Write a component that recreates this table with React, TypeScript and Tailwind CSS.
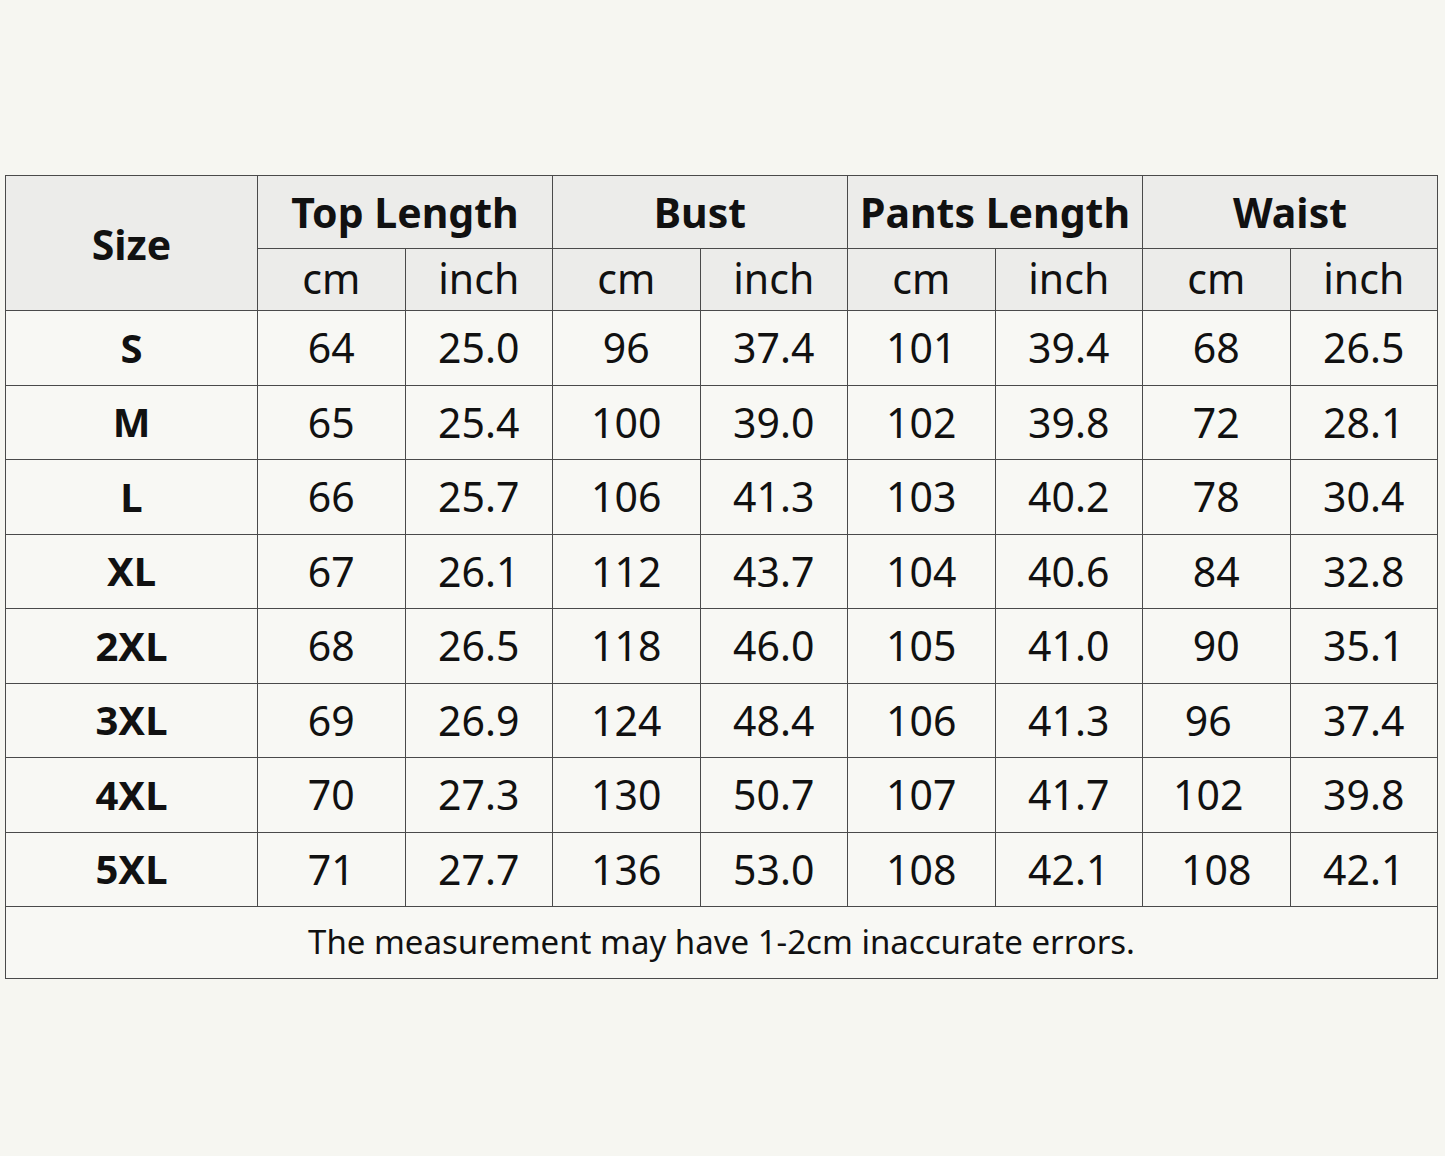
import React from 'react';

type Row = { size: string; vals: string[]; shift?: boolean };

const rows: Row[] = [
  { size: 'S', vals: ['64', '25.0', '96', '37.4', '101', '39.4', '68', '26.5'] },
  { size: 'M', vals: ['65', '25.4', '100', '39.0', '102', '39.8', '72', '28.1'] },
  { size: 'L', vals: ['66', '25.7', '106', '41.3', '103', '40.2', '78', '30.4'] },
  { size: 'XL', vals: ['67', '26.1', '112', '43.7', '104', '40.6', '84', '32.8'] },
  { size: '2XL', vals: ['68', '26.5', '118', '46.0', '105', '41.0', '90', '35.1'] },
  { size: '3XL', vals: ['69', '26.9', '124', '48.4', '106', '41.3', '96', '37.4'], shift: true },
  { size: '4XL', vals: ['70', '27.3', '130', '50.7', '107', '41.7', '102', '39.8'], shift: true },
  { size: '5XL', vals: ['71', '27.7', '136', '53.0', '108', '42.1', '108', '42.1'] },
];

const groups = ['Top Length', 'Bust', 'Pants Length', 'Waist'];

export default function App() {
  return (
    <div className="min-h-[1156px] w-[1445px] bg-[#f6f6f1] pt-[175px] pl-[5px] font-['Noto_Sans',sans-serif] text-[#111]">
      <table className="w-[1433px] table-fixed border-collapse border border-[#4a4a4a]">
        <colgroup>
          <col className="w-[252px]" />
          {Array.from({ length: 8 }).map((_, i) => (
            <col key={i} />
          ))}
        </colgroup>
        <thead>
          <tr className="h-[73px] bg-[#ececea]">
            <th rowSpan={2} className="border border-[#4a4a4a] pt-[2px] text-[41px] font-bold leading-none">
              Size
            </th>
            {groups.map((g) => (
              <th key={g} colSpan={2} className="border border-[#4a4a4a] text-[41px] font-bold leading-none">
                {g}
              </th>
            ))}
          </tr>
          <tr className="h-[62px] bg-[#ececea]">
            {groups.map((g) => (
              <React.Fragment key={g}>
                <th className="border border-[#4a4a4a] pb-[2px] text-[41px] font-normal leading-none">cm</th>
                <th className="border border-[#4a4a4a] pb-[2px] text-[41px] font-normal leading-none">inch</th>
              </React.Fragment>
            ))}
          </tr>
        </thead>
        <tbody className="bg-[#f8f8f4]">
          {rows.map((r) => (
            <tr key={r.size} className="h-[74.5px]">
              <td className="border border-[#4a4a4a] text-center text-[40px] font-bold leading-none">{r.size}</td>
              {r.vals.map((v, i) => (
                <td
                  key={i}
                  className={
                    i === 6 && r.shift
                      ? 'border border-[#4a4a4a] pr-[16px] text-center text-[41px] leading-none'
                      : 'border border-[#4a4a4a] text-center text-[41px] leading-none'
                  }
                >
                  {v}
                </td>
              ))}
            </tr>
          ))}
          <tr className="h-[72px]">
            <td colSpan={9} className="border border-[#4a4a4a] pb-[2px] text-center text-[33px] leading-none">
              The measurement may have 1-2cm inaccurate errors.
            </td>
          </tr>
        </tbody>
      </table>
    </div>
  );
}
